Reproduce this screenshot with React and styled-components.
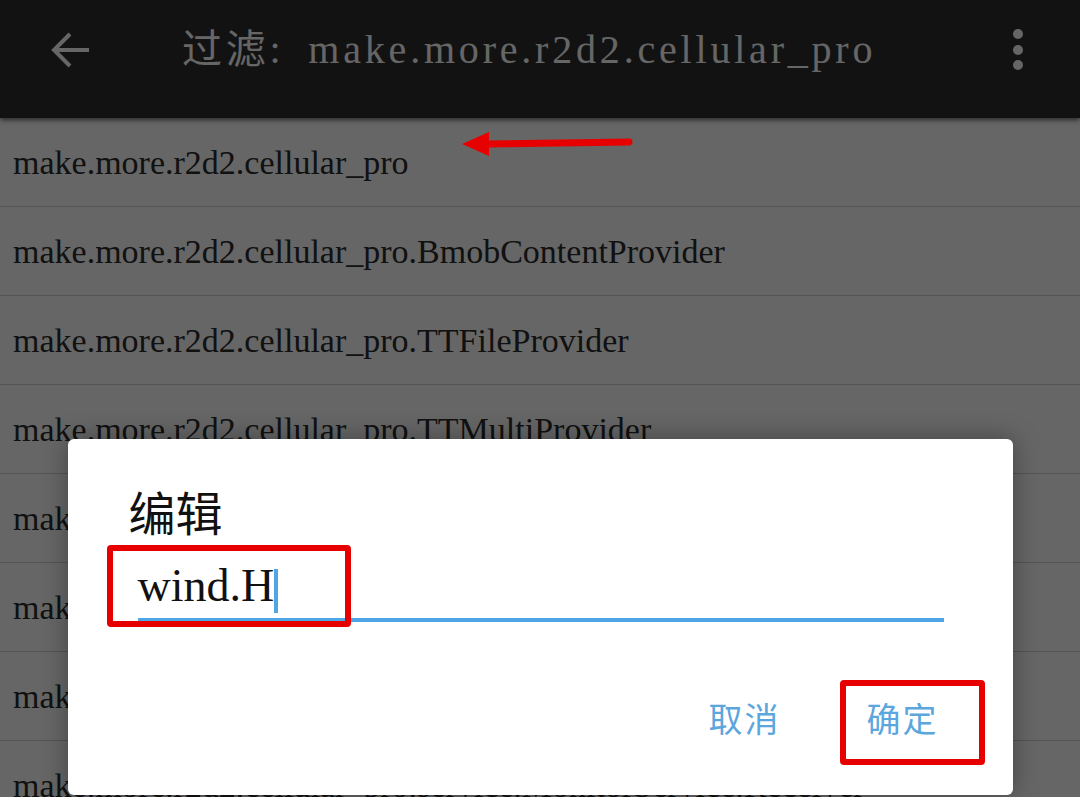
import styled, {createGlobalStyle} from 'styled-components'

const rows = [
  'make.more.r2d2.cellular_pro',
  'make.more.r2d2.cellular_pro.BmobContentProvider',
  'make.more.r2d2.cellular_pro.TTFileProvider',
  'make.more.r2d2.cellular_pro.TTMultiProvider',
  'make.more.r2d2.cellular_pro.MainActivity',
  'make.more.r2d2.cellular_pro.SplashActivity',
  'make.more.r2d2.cellular_pro.SettingActivity',
  'make.more.r2d2.cellular_pro.service.MonitorService.Receiver',
]

const App = () => {
  return (
    <Page>
      <GlobalStyle />
      <TopBar>
        <BackIcon width="42" height="42" viewBox="0 0 42 42">
          <path d="M40 21H5M21 5L5 21l16 16" fill="none" stroke="#fff" strokeWidth="4" />
        </BackIcon>
        <Title>过滤: make.more.r2d2.cellular_pro</Title>
        <MoreIcon width="12" height="44" viewBox="0 0 12 44">
          <circle cx="6" cy="6" r="5" fill="#fff" />
          <circle cx="6" cy="22" r="5" fill="#fff" />
          <circle cx="6" cy="37" r="5" fill="#fff" />
        </MoreIcon>
      </TopBar>
      <List>
        {rows.map((r) => (
          <Row key={r}>{r}</Row>
        ))}
      </List>

      <Overlay>
        <Dialog>
          <DialogTitle>编辑</DialogTitle>
          <Field $marked>
            <FieldText>wind.H</FieldText>
            <Caret />
          </Field>
          <Actions>
            <ActionButton>取消</ActionButton>
            <ActionButton $marked>确定</ActionButton>
          </Actions>
        </Dialog>
      </Overlay>

      <MarkArrow width="176" height="32" viewBox="0 0 176 32">
        <line x1="28" y1="16" x2="171" y2="14" stroke="#e60000" strokeWidth="7" strokeLinecap="round" />
        <polygon points="4,16 31,4 31,28" fill="#e60000" />
      </MarkArrow>
    </Page>
  )
}

export default App

const GlobalStyle = createGlobalStyle`
  html, body {
    margin: 0;
    padding: 0;
    background: #666;
  }
  body {
    font-family: "Liberation Serif", "Noto Sans CJK SC", serif;
  }
`

const Page = styled.div`
  position: relative;
  width: 1080px;
  height: 797px;
  overflow: hidden;
  background: #fff;
`

const TopBar = styled.header`
  position: relative;
  z-index: 1;
  height: 118px;
  box-sizing: border-box;
  padding: 0 56px 18px 49px;
  display: flex;
  align-items: center;
  background: #2e2e2e;
  box-shadow: 0 2px 5px rgba(0, 0, 0, 0.6);
`

const BackIcon = styled.svg`
  flex-shrink: 0;
`

const Title = styled.h1`
  margin: 0 0 0 91px;
  font-family: "Liberation Serif", "Noto Sans CJK SC", serif;
  font-weight: normal;
  font-size: 40px;
  line-height: 1;
  letter-spacing: 3.8px;
  word-spacing: 10px;
  color: #fff;
  white-space: nowrap;
`

const MoreIcon = styled.svg`
  margin-left: auto;
  flex-shrink: 0;
`

const List = styled.div`
  display: flex;
  flex-direction: column;
`

const Row = styled.div`
  height: 89px;
  box-sizing: border-box;
  padding-left: 13px;
  border-bottom: 1px solid #d2d2d2;
  font-size: 34px;
  line-height: 89px;
  color: #2b2b2b;
  white-space: nowrap;
`

const Overlay = styled.div`
  position: absolute;
  inset: 0;
  z-index: 2;
  background: rgba(0, 0, 0, 0.6);
  display: flex;
  justify-content: center;
  align-items: flex-end;
  padding-bottom: 2px;
  box-sizing: border-box;
`

const Dialog = styled.div`
  width: 945px;
  height: 356px;
  box-sizing: border-box;
  padding: 49px 69px 0 70px;
  background: #fff;
  border-radius: 6px;
  box-shadow: 0 0 26px rgba(0, 0, 0, 0.35);
  display: flex;
  flex-direction: column;
`

const DialogTitle = styled.div`
  margin-left: -9px;
  font-family: "Noto Sans CJK SC", sans-serif;
  font-size: 47px;
  line-height: 46px;
  color: #111;
`

const Field = styled.div`
  position: relative;
  margin-top: 30px;
  display: flex;
  align-items: flex-end;
  padding-bottom: 5px;
  border-bottom: 4px solid #4ea6e6;

  &::before {
    content: '';
    display: ${({$marked}) => ($marked ? 'block' : 'none')};
    position: absolute;
    left: -31px;
    top: -19px;
    width: 244px;
    height: 82px;
    box-sizing: border-box;
    border: 6px solid #e60000;
    border-radius: 4px;
  }
`

const FieldText = styled.span`
  font-family: "Liberation Serif", serif;
  font-size: 46px;
  line-height: 44px;
  margin-bottom: 5px;
  color: #111;
`

const Caret = styled.span`
  width: 4px;
  height: 44px;
  background: #4ea6e6;
`

const Actions = styled.div`
  margin-top: 79px;
  padding-right: 5px;
  display: flex;
  justify-content: flex-end;
  gap: 86px;
`

const ActionButton = styled.button`
  position: relative;
  padding: 0;
  border: none;
  background: none;
  font-family: "Noto Sans CJK SC", sans-serif;
  font-size: 34px;
  line-height: 34px;
  letter-spacing: 2px;
  color: #5ba6dd;

  &::after {
    content: '';
    display: ${({$marked}) => ($marked ? 'block' : 'none')};
    position: absolute;
    left: -27px;
    top: -21px;
    width: 145px;
    height: 85px;
    box-sizing: border-box;
    border: 6px solid #e60000;
    border-radius: 4px;
  }
`

const MarkArrow = styled.svg`
  position: absolute;
  z-index: 3;
  left: 458px;
  top: 128px;
`
